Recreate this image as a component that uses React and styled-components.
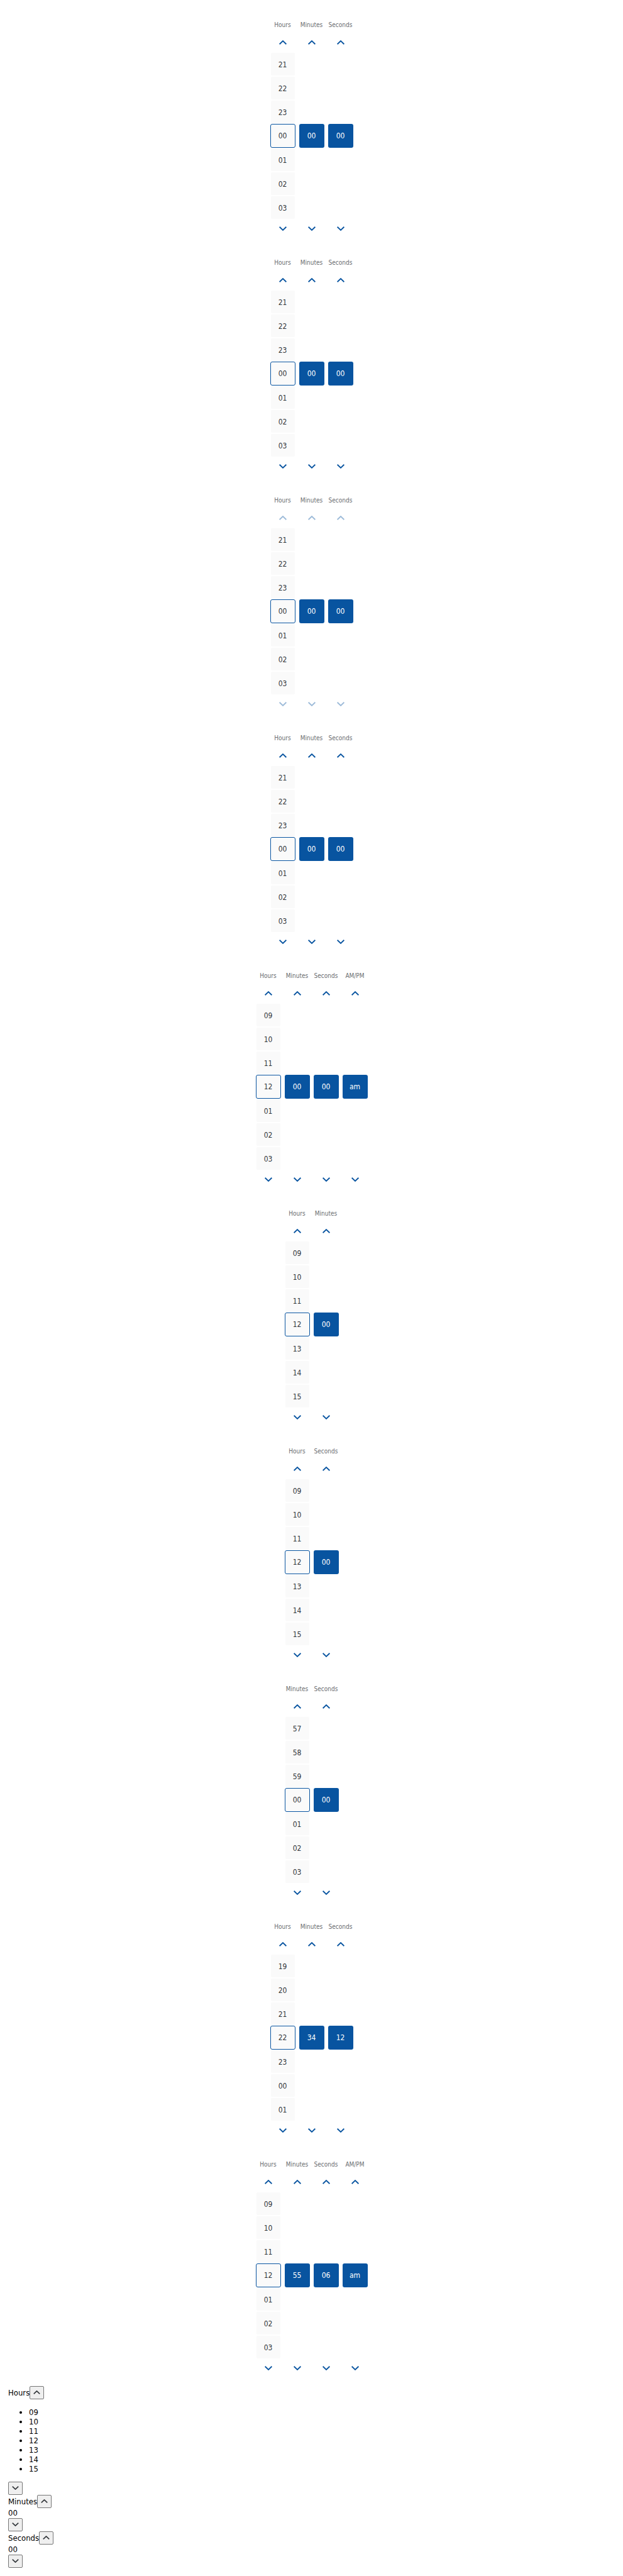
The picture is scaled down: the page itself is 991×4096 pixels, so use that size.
import React from "react";
import styled, { createGlobalStyle } from "styled-components";

const GlobalStyle = createGlobalStyle`
  body {
    margin: 0;
    background: #fff;
    color: #000;
    font-family: "DejaVu Sans Condensed", "DejaVu Sans", sans-serif;
    font-size: 13px;
    line-height: 15px;
  }
`;

const Page = styled.main`
  display: flex;
  flex-direction: column;
`;

const Picker = styled.section`
  display: flex;
  justify-content: center;
  gap: 6px;
  padding-top: 32px;
`;

const Column = styled.div`
  display: flex;
  flex-direction: column;
  width: 40px;
`;

const ColumnLabel = styled.span`
  display: flex;
  justify-content: center;
  margin-bottom: 5px;
  color: #6a6d70;
  font-size: 10px;
  line-height: 16px;
  white-space: nowrap;
`;

const ArrowButton = styled.button`
  display: flex;
  align-items: center;
  justify-content: center;
  height: 29px;
  padding: 0;
  border: 0;
  background: transparent;
  color: #0854a0;

  &:disabled {
    opacity: 0.4;
  }
`;

const SliderArea = styled.div`
  display: flex;
  flex-direction: column;
  justify-content: center;
  height: 266px;
  margin-bottom: 1px;
`;

const Options = styled.ul`
  display: flex;
  flex-direction: column;
  margin: 1px 0 0;
  padding: 0;
  list-style: none;
`;

const Option = styled.li`
  box-sizing: border-box;
  height: ${(p) => (p.$selected ? 38 : 36)}px;
  margin: ${(p) => (p.$selected ? "0" : "1px")};
  padding-top: ${(p) => (p.$selected ? 1 : 2)}px;
  border: ${(p) => (p.$selected ? "1px solid #0854a0" : "0")};
  border-radius: ${(p) => (p.$selected ? 3 : 2)}px;
  background: #fafafa;
  color: #32363a;
  font-size: 12px;
  line-height: 34px;
  text-align: center;
`;

const ValueTile = styled.button`
  height: 38px;
  margin-top: 1px;
  padding: 0;
  border: 0;
  border-radius: 3px;
  background: #0854a0;
  color: #fff;
  font-family: inherit;
  font-size: 12px;
  line-height: 38px;
`;

const PlainPicker = styled.section`
  padding: 14px 13px;
`;

const PlainRow = styled.div`
  display: flex;
  align-items: center;
`;

const PlainButton = styled.button`
  display: flex;
  justify-content: center;
  box-sizing: border-box;
  width: 23px;
  height: 21px;
  padding: 6px 0 0;
  border: 1px solid #767676;
  border-radius: 2px;
  background: #efefef;
  color: #32363a;
`;

const PlainList = styled.ul`
  margin: 13px 0;
  padding-left: 33px;
`;

const PlainValue = styled.div`
  line-height: 16px;
`;

function Chevron({ down, width = 12, height = 7 }) {
  return (
    <svg width={width} height={height} viewBox="0 0 14 8" aria-hidden="true">
      <path
        d={down ? "M.7 .8L7 6.8L13.3 .8" : "M.7 7.2L7 1.2L13.3 7.2"}
        fill="none"
        stroke="currentColor"
        strokeWidth="2.2"
      />
    </svg>
  );
}

const hours24 = ["21", "22", "23", "00", "01", "02", "03"];
const noon12 = ["09", "10", "11", "12", "01", "02", "03"];
const noon24 = ["09", "10", "11", "12", "13", "14", "15"];
const minutes = ["57", "58", "59", "00", "01", "02", "03"];
const evening = ["19", "20", "21", "22", "23", "00", "01"];

const fullDay = [
  ["Hours", hours24],
  ["Minutes", "00"],
  ["Seconds", "00"],
];

const pickers = [
  { columns: fullDay },
  { columns: fullDay },
  { columns: fullDay, disabled: true },
  { columns: fullDay },
  { columns: [["Hours", noon12], ["Minutes", "00"], ["Seconds", "00"], ["AM/PM", "am"]] },
  { columns: [["Hours", noon24], ["Minutes", "00"]] },
  { columns: [["Hours", noon24], ["Seconds", "00"]] },
  { columns: [["Minutes", minutes], ["Seconds", "00"]] },
  { columns: [["Hours", evening], ["Minutes", "34"], ["Seconds", "12"]] },
  { columns: [["Hours", noon12], ["Minutes", "55"], ["Seconds", "06"], ["AM/PM", "am"]] },
];

function SliderColumn({ label, value, disabled }) {
  return (
    <Column role="group" aria-label={label}>
      <ColumnLabel>{label}</ColumnLabel>
      <ArrowButton type="button" aria-label={`Previous ${label}`} disabled={disabled}>
        <Chevron />
      </ArrowButton>
      <SliderArea>
        {Array.isArray(value) ? (
          <Options>
            {value.map((text, i) => (
              <Option key={text} $selected={i === 3}>{text}</Option>
            ))}
          </Options>
        ) : (
          <ValueTile type="button">{value}</ValueTile>
        )}
      </SliderArea>
      <ArrowButton type="button" aria-label={`Next ${label}`} disabled={disabled}>
        <Chevron down />
      </ArrowButton>
    </Column>
  );
}

function PlainColumn({ label, value }) {
  return (
    <div role="group" aria-label={label}>
      <PlainRow>
        <span>{label}</span>
        <PlainButton type="button" aria-label={`Previous ${label}`}>
          <Chevron width={11} height={6} />
        </PlainButton>
      </PlainRow>
      {Array.isArray(value) ? (
        <PlainList>
          {value.map((text) => (
            <li key={text}>{text}</li>
          ))}
        </PlainList>
      ) : (
        <PlainValue>{value}</PlainValue>
      )}
      <PlainButton type="button" aria-label={`Next ${label}`}>
        <Chevron down width={11} height={6} />
      </PlainButton>
    </div>
  );
}

export default function App() {
  return (
    <>
      <GlobalStyle />
      <Page>
        {pickers.map(({ columns, disabled }, i) => (
          <Picker key={i}>
            {columns.map(([label, value]) => (
              <SliderColumn key={label} label={label} value={value} disabled={disabled} />
            ))}
          </Picker>
        ))}
        <PlainPicker>
          <PlainColumn label="Hours" value={noon24} />
          <PlainColumn label="Minutes" value="00" />
          <PlainColumn label="Seconds" value="00" />
        </PlainPicker>
      </Page>
    </>
  );
}
